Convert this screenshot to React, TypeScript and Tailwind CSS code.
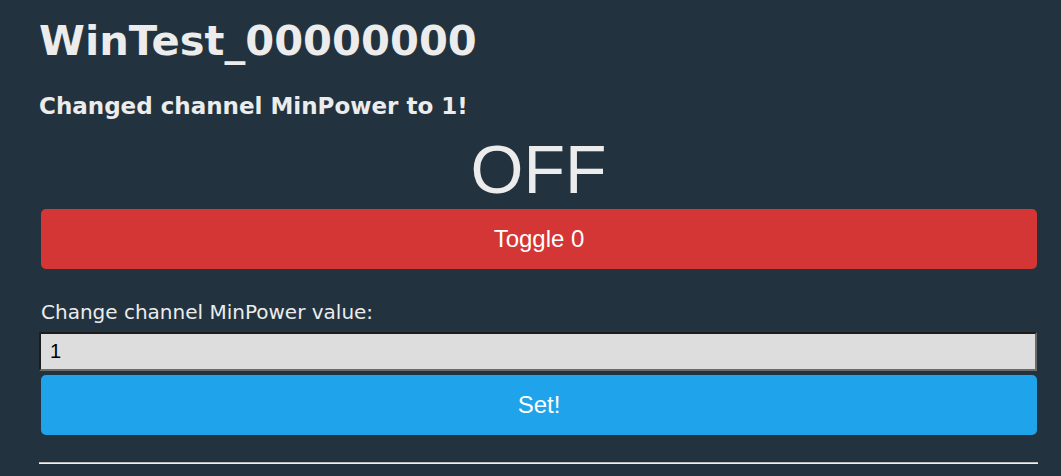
export default function App() {
  return (
    <div className="min-h-[476px] w-full bg-[#22333f] font-['DejaVu_Sans',Verdana,sans-serif] text-[#ececec]">
      <div className="ml-[39px] w-[999px] pt-[13px]">
        <h1 className="text-[41.6px] font-bold leading-[56px]">WinTest_00000000</h1>
        <h3 className="mt-[22px] text-[23px] font-bold leading-[30px]">Changed channel MinPower to 1!</h3>
        <div className="mt-[10px] text-center font-['Liberation_Sans',Arial,sans-serif] text-[68px] leading-[76px]">OFF</div>
        <button className="mx-[2px] mt-[2px] flex h-[60px] w-[996px] items-center justify-center rounded-[5px] bg-[#d43535] font-['Liberation_Sans',Arial,sans-serif] text-[24px] text-white">
          Toggle 0
        </button>
        <label className="mt-[30px] block pl-[2px] text-[20px] leading-[26px]">Change channel MinPower value:</label>
        <input
          defaultValue="1"
          className="mt-[7px] block h-[39px] w-[998px] border-2 border-t-[#1c1c1c] border-l-[#1c1c1c] border-r-[#6b6b6b] border-b-[#6b6b6b] bg-[#dddddd] px-[9px] font-['Liberation_Sans',Arial,sans-serif] text-[20px] text-black outline-none"
        />
        <button className="mx-[2px] mt-[4px] flex h-[60px] w-[996px] items-center justify-center rounded-[5px] bg-[#1fa3ea] font-['Liberation_Sans',Arial,sans-serif] text-[24px] text-white">
          Set!
        </button>
        <hr className="mt-[27px] border-t border-b border-t-[#bdbdbd] border-b-[#f0f0f0]" />
      </div>
    </div>
  );
}
